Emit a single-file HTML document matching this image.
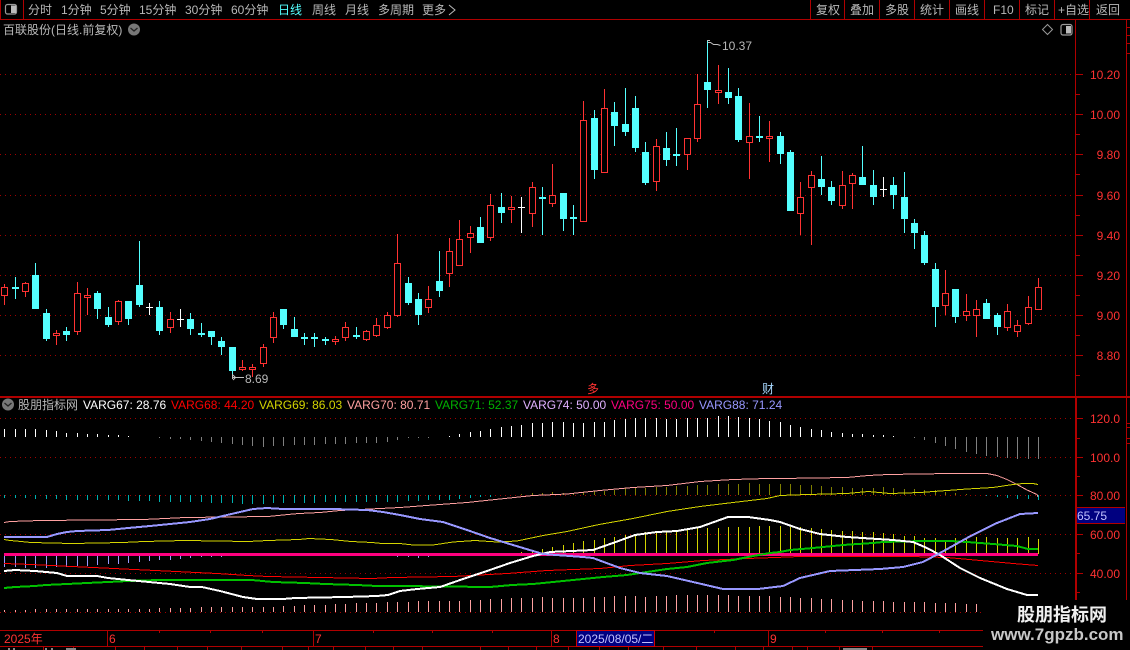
<!DOCTYPE html>
<html><head><meta charset="utf-8"><style>
html,body{margin:0;padding:0;background:#000;width:1130px;height:650px;overflow:hidden}
svg{display:block}
text{font-family:"Liberation Sans","WenQuanYi Zen Hei","Noto Sans CJK SC",sans-serif;font-size:12px}
</style></head><body>
<svg width="1130" height="650" viewBox="0 0 1130 650" shape-rendering="crispEdges">
<rect width="1130" height="650" fill="#000"/>
<!-- top bar -->
<path d="M0 19.5H1130M23.5 0V19M810.5 0V19M844.5 0V19M879.5 0V19M914.5 0V19M949.5 0V19M984.5 0V19M1019.5 0V19M1054.5 0V19M1089.5 0V19" stroke="#b00000" fill="none"/>
<rect x="0" y="0" width="1" height="19" fill="#b00000"/>
<g shape-rendering="auto">
<rect x="5.5" y="4.5" width="11" height="9.5" rx="2" fill="none" stroke="#999" stroke-width="1.2"/><rect x="11" y="5.5" width="5" height="7.5" fill="#bbb"/>
</g>
<g fill="#b8b8b8">
<text x="28" y="14">分时</text><text x="61" y="14">1分钟</text><text x="100" y="14">5分钟</text><text x="139" y="14">15分钟</text><text x="185" y="14">30分钟</text><text x="231" y="14">60分钟</text><text x="278" y="14" fill="#54ffff">日线</text><text x="312" y="14">周线</text><text x="345" y="14">月线</text><text x="378" y="14">多周期</text><text x="422" y="14">更多</text>
<text x="816" y="14">复权</text><text x="850" y="14">叠加</text><text x="885" y="14">多股</text><text x="920" y="14">统计</text><text x="955" y="14">画线</text><text x="993" y="14">F10</text><text x="1025" y="14">标记</text><text x="1058" y="14">+自选</text><text x="1096" y="14">返回</text>
<text x="3" y="34">百联股份(日线.前复权)</text>
<text x="722" y="50">10.37</text><text x="245" y="383">8.69</text>
</g>
<path d="M449 5l6 5-6 5" fill="none" stroke="#bbb" shape-rendering="auto"/>
<g shape-rendering="auto">
<circle cx="134" cy="29.5" r="6" fill="#777"/><path d="M130.5 28l3.5 3 3.5-3" fill="none" stroke="#222" stroke-width="1.3"/>
<path d="M1047.5 24.5l5 5-5 5-5-5z" fill="none" stroke="#999"/>
<rect x="1061" y="24.5" width="11" height="10.5" rx="2" fill="none" stroke="#999" stroke-width="1.2"/><rect x="1066" y="26" width="5" height="7.5" fill="#bbb"/>
</g>
<!-- main grid -->
<path d="M0 74.5H1075M0 114.5H1075M0 154.5H1075M0 195.5H1075M0 235.5H1075M0 275.5H1075M0 315.5H1075M0 355.5H1075" stroke="#a00000" stroke-dasharray="1 4" fill="none"/>
<!-- frame -->
<path d="M1075.5 19V396M1126.5 19V600M0 396.5H1130M0 397.5H1130M1077 507.5H1125M1077 523.5H1125" stroke="#b00000" fill="none"/>
<rect x="1075" y="397" width="2" height="203" fill="#b00000"/>
<path d="M1076 74.5h7M1076 94.5h4M1076 114.5h7M1076 134.5h4M1076 154.5h7M1076 174.5h4M1076 195.5h7M1076 215.5h4M1076 235.5h7M1076 255.5h4M1076 275.5h7M1076 295.5h4M1076 315.5h7M1076 335.5h4M1076 355.5h7M1076 375.5h4M1077 418.5h6M1077 438.5h3M1077 457.5h6M1077 476.5h3M1077 495.5h6M1077 534.5h6M1077 553.5h3M1077 573.5h6M1077 592.5h3M1127 27.5h3M1127 35.5h3M1127 43.5h3M1127 53.5h3M1127 423.5h3M1127 427.5h3M1127 438.5h3M1127 443.5h3" stroke="#b00000" fill="none"/>
<g fill="#ff3232" text-anchor="end">
<text x="1120" y="79">10.20</text><text x="1120" y="119">10.00</text><text x="1120" y="159">9.80</text><text x="1120" y="200">9.60</text><text x="1120" y="240">9.40</text><text x="1120" y="280">9.20</text><text x="1120" y="320">9.00</text><text x="1120" y="360">8.80</text>
<text x="1120" y="423">120.0</text><text x="1120" y="462">100.0</text><text x="1120" y="500">80.00</text><text x="1120" y="539">60.00</text><text x="1120" y="578">40.00</text>
</g>
<rect x="1077" y="508" width="48" height="15" fill="#000080"/>
<text x="1077" y="520" fill="#c0c0ff">65.75</text>
<!-- candles -->
<path fill="none" stroke="#ff3232" d="M4.5 284V305M25.5 282V297M56.5 330V345M77.5 282V335M87.5 288V315M118.5 300V325M170.5 312V333M242.5 360V371M252.5 364V377M263.5 344V367M273.5 312V343M335.5 336V345M345.5 322V341M366.5 330V341M376.5 318V337M387.5 312V329M397.5 234V317M428.5 286V313M449.5 238V287M459.5 220V266M470.5 226V253M490.5 194V241M511.5 196V223M532.5 182V227M552.5 164V207M583.5 101V222M604.5 89V173M656.5 139V191M687.5 138V170M697.5 74V142M718.5 65V104M749.5 103V179M769.5 121V162M800.5 182V235M811.5 171V245M842.5 171V209M852.5 173V209M945.5 270V315M966.5 294V321M976.5 300V337M1007.5 304V331M1017.5 320V337M1028.5 296V325M1038.5 278V310"/>
<path fill="#000" stroke="#ff3232" d="M1.5 287.5h6v8h-6zM22.5 283.5h6v8h-6zM53.5 333.5h6v2h-6zM74.5 293.5h6v38h-6zM84.5 295.5h6v2h-6zM115.5 301.5h6v20h-6zM167.5 319.5h6v8h-6zM239.5 367.5h6v2h-6zM249.5 367.5h6v2h-6zM260.5 347.5h6v16h-6zM270.5 317.5h6v20h-6zM332.5 339.5h6v2h-6zM342.5 327.5h6v10h-6zM363.5 331.5h6v8h-6zM373.5 325.5h6v10h-6zM384.5 315.5h6v12h-6zM394.5 263.5h6v52h-6zM425.5 299.5h6v8h-6zM446.5 251.5h6v22h-6zM456.5 239.5h6v26h-6zM467.5 233.5h6v4h-6zM487.5 205.5h6v32h-6zM508.5 207.5h6v2h-6zM529.5 187.5h6v26h-6zM549.5 195.5h6v8h-6zM580.5 120.5h6v101h-6zM601.5 108.5h6v64h-6zM653.5 146.5h6v35h-6zM684.5 138.5h6v16h-6zM694.5 104.5h6v34h-6zM715.5 90.5h6v2h-6zM746.5 136.5h6v6h-6zM766.5 136.5h6v2h-6zM797.5 197.5h6v16h-6zM808.5 175.5h6v12h-6zM839.5 185.5h6v20h-6zM849.5 175.5h6v8h-6zM942.5 293.5h6v12h-6zM963.5 311.5h6v4h-6zM973.5 309.5h6v6h-6zM1004.5 311.5h6v16h-6zM1014.5 325.5h6v6h-6zM1025.5 307.5h6v16h-6zM1035.5 287.5h6v22h-6z"/>
<path fill="none" stroke="#54ffff" d="M15.5 277V299M35.5 263V309M46.5 309V341M66.5 327V341M97.5 291V319M108.5 307V327M128.5 301V325M139.5 241V307M159.5 301V335M190.5 313V335M201.5 323V337M211.5 331V345M221.5 337V355M232.5 347V379M283.5 309V329M294.5 317V337M304.5 333V345M314.5 333V347M325.5 337V345M356.5 327V339M408.5 277V305M418.5 293V325M439.5 251V297M480.5 217V243M501.5 193V223M542.5 187V235M563.5 193V231M573.5 205V235M594.5 110V179M614.5 102V146M625.5 88V136M635.5 96V152M645.5 142V185M666.5 132V166M676.5 128V166M707.5 40V108M728.5 68V104M738.5 88V142M759.5 116V142M780.5 132V164M790.5 150V211M821.5 156V195M831.5 181V205M862.5 146V185M873.5 170V205M893.5 177V209M904.5 172V233M914.5 219V249M924.5 231V265M935.5 263V327M955.5 289V323M986.5 299V319M997.5 313V335"/>
<path fill="#54ffff" d="M12 287h7v2h-7zM32 275h7v34h-7zM43 313h7v26h-7zM63 331h7v4h-7zM94 293h7v16h-7zM105 317h7v8h-7zM125 301h7v18h-7zM136 285h7v20h-7zM156 307h7v24h-7zM187 319h7v10h-7zM198 333h7v2h-7zM208 331h7v6h-7zM218 341h7v6h-7zM229 347h7v24h-7zM280 309h7v16h-7zM291 329h7v8h-7zM301 337h7v2h-7zM311 337h7v2h-7zM322 339h7v2h-7zM353 335h7v2h-7zM405 283h7v20h-7zM415 299h7v16h-7zM436 281h7v10h-7zM477 227h7v16h-7zM498 207h7v6h-7zM539 197h7v2h-7zM560 193h7v26h-7zM570 217h7v2h-7zM591 118h7v52h-7zM611 112h7v14h-7zM622 124h7v8h-7zM632 108h7v40h-7zM642 152h7v31h-7zM663 148h7v12h-7zM673 154h7v2h-7zM704 82h7v8h-7zM725 92h7v6h-7zM735 96h7v44h-7zM756 136h7v2h-7zM777 136h7v18h-7zM787 152h7v59h-7zM818 179h7v8h-7zM828 187h7v14h-7zM859 177h7v8h-7zM870 185h7v12h-7zM890 185h7v10h-7zM901 197h7v22h-7zM911 223h7v10h-7zM921 235h7v28h-7zM932 269h7v38h-7zM952 289h7v28h-7zM983 303h7v16h-7zM994 315h7v12h-7z"/>
<path fill="none" stroke="#fff" d="M149.5 303V315M146 307.5h7M180.5 309V327M177 319.5h7M521.5 197V233M518 207.5h7M883.5 177V197M880 189.5h7"/>
<!-- flag and arrow -->
<path d="M707 40.5h3M707.5 42.5h3l3 2h4l3 1" fill="none" stroke="#c0c0c0" shape-rendering="auto"/>
<path d="M232.5 374V379M233 377.5H244M233 375l2 2M233 380l3-3" fill="none" stroke="#c0c0c0" shape-rendering="auto"/>
<text x="587" y="393" fill="#ff3232">多</text>
<text x="762" y="393" fill="#a8d8ff">财</text>
<!-- indicator title -->
<g shape-rendering="auto"><circle cx="8" cy="404.5" r="6" fill="#777"/><path d="M4.5 403l3.5 3 3.5-3" fill="none" stroke="#222" stroke-width="1.3"/></g>
<text x="18" y="409" fill="#b8b8b8">股朋指标网</text>
<text x="83" y="409" fill="#fff">VARG67: 28.76</text>
<text x="171" y="409" fill="#ff0000">VARG68: 44.20</text>
<text x="259" y="409" fill="#d4d400">VARG69: 86.03</text>
<text x="347" y="409" fill="#ffa0a0">VARG70: 80.71</text>
<text x="435" y="409" fill="#00b000">VARG71: 52.37</text>
<text x="523" y="409" fill="#e0b0ff">VARG74: 50.00</text>
<text x="611" y="409" fill="#ff0080">VARG75: 50.00</text>
<text x="699" y="409" fill="#9898ff">VARG88: 71.24</text>
<!-- lower grid -->
<path d="M0 418.5H1075M0 457.5H1075M0 495.5H1075M0 534.5H1075M0 573.5H1075M0 612.5H1075" stroke="#a00000" stroke-dasharray="1 4" fill="none"/>
<!-- white bars -->
<path fill="none" stroke="#fff" d="M4.5 429V437M15.5 429V437M25.5 429V437M35.5 429V437M46.5 430V437M56.5 431V437M66.5 433V437M77.5 433V437M87.5 434V437M97.5 434V437M108.5 435V437M118.5 435V437M128.5 436V437M449.5 436V437M459.5 434V437M470.5 432V437M480.5 431V437M490.5 429V437M501.5 427V437M511.5 426V437M521.5 425V437M532.5 423V437M542.5 423V437M552.5 422V437M563.5 422V437M573.5 423V437M583.5 423V437M594.5 422V437M604.5 422V437M614.5 420V437M625.5 419V437M635.5 418V437M645.5 418V437M656.5 418V437M666.5 419V437M676.5 419V437M687.5 418V437M697.5 418V437M707.5 418V437M718.5 416V437M728.5 416V437M738.5 417V437M749.5 418V437M759.5 419V437M769.5 421V437M780.5 422V437M790.5 425V437M800.5 427V437M811.5 429V437M821.5 430V437M831.5 432V437M842.5 433V437M852.5 434V437M862.5 434V437M873.5 435V437M883.5 435V437M893.5 436V437"/>
<path fill="none" stroke="#808080" d="M159.5 437V438M170.5 437V439M180.5 437V439M190.5 437V440M201.5 437V441M211.5 437V442M221.5 437V443M232.5 437V444M242.5 437V445M252.5 437V446M263.5 437V447M273.5 437V446M283.5 437V446M294.5 437V445M304.5 437V445M314.5 437V445M325.5 437V444M335.5 437V444M345.5 437V444M356.5 437V443M366.5 437V443M376.5 437V443M387.5 437V442M397.5 437V440M408.5 437V438M418.5 437V438M428.5 437V438M914.5 437V438M924.5 437V440M935.5 437V443M945.5 437V446M955.5 437V449M966.5 437V452M976.5 437V454M986.5 437V456M997.5 437V457M1007.5 437V458M1017.5 437V459M1028.5 437V459M1038.5 437V459"/>
<!-- teal and olive -->
<path fill="none" stroke="#00b0b0" d="M4.5 495V498M15.5 495V498M25.5 495V498M35.5 495V499M46.5 495V499M56.5 495V499M66.5 495V500M77.5 495V500M87.5 495V500M97.5 495V500M108.5 495V500M118.5 495V500M128.5 495V501M139.5 495V501M149.5 495V501M159.5 495V502M170.5 495V502M180.5 495V502M190.5 495V502M201.5 495V502M211.5 495V503M221.5 495V503M232.5 495V503M242.5 495V504M252.5 495V504M263.5 495V504M273.5 495V503M283.5 495V503M294.5 495V503M304.5 495V503M314.5 495V503M325.5 495V502M335.5 495V502M345.5 495V502M356.5 495V502M366.5 495V502M376.5 495V502M387.5 495V502M397.5 495V502M408.5 495V501M418.5 495V501M428.5 495V500M439.5 495V500M449.5 495V500M459.5 495V499M470.5 495V498M480.5 495V497M490.5 495V497M986.5 495V496M997.5 495V497M1007.5 495V498M1017.5 495V499M1028.5 495V499M1038.5 495V500"/>
<path fill="none" stroke="#808000" d="M521.5 494V495M532.5 493V495M542.5 493V495M552.5 492V495M563.5 493V495M573.5 493V495M583.5 492V495M594.5 491V495M604.5 491V495M614.5 490V495M625.5 488V495M635.5 488V495M645.5 488V495M656.5 487V495M666.5 487V495M676.5 486V495M687.5 486V495M697.5 485V495M707.5 485V495M718.5 484V495M728.5 484V495M738.5 484V495M749.5 483V495M759.5 484V495M769.5 484V495M780.5 484V495M790.5 484V495M800.5 485V495M811.5 485V495M821.5 486V495M831.5 487V495M842.5 487V495M852.5 488V495M862.5 488V495M873.5 488V495M883.5 487V495M893.5 488V495M904.5 489V495M914.5 489V495M924.5 490V495M935.5 490V495M945.5 492V495M955.5 493V495M966.5 494V495"/>
<!-- purple bars, yellow bars, pink bars -->
<path fill="none" stroke="#9898ff" d="M4.5 554V567M15.5 554V567M25.5 554V568M35.5 554V568M46.5 554V568M56.5 554V567M66.5 554V567M77.5 554V566M87.5 554V566M97.5 554V565M108.5 554V564M118.5 554V564M128.5 554V563M139.5 554V562M149.5 554V561M159.5 554V560M170.5 554V560M180.5 554V559M190.5 554V558M201.5 554V557M211.5 554V557M221.5 554V557M232.5 554V556M242.5 554V556M252.5 554V556M263.5 554V556M273.5 554V556M387.5 554V556M397.5 554V557M408.5 554V557M418.5 554V558M428.5 554V557M439.5 554V556"/>
<path fill="none" stroke="#d4d400" d="M521.5 552V554M532.5 550V554M542.5 549V554M552.5 547V554M563.5 545V554M573.5 543V554M583.5 541V554M594.5 540V554M604.5 538V554M614.5 537V554M625.5 535V554M635.5 534V554M645.5 532V554M656.5 533V554M666.5 531V554M676.5 531V554M687.5 529V554M697.5 528V554M707.5 528V554M718.5 528V554M728.5 527V554M738.5 527V554M749.5 527V554M759.5 526V554M769.5 526V554M780.5 526V554M790.5 527V554M800.5 527V554M811.5 528V554M821.5 529V554M831.5 530V554M842.5 531V554M852.5 531V554M862.5 532V554M873.5 532V554M883.5 533V554M893.5 534V554M904.5 536V554M914.5 536V554M924.5 538V554M935.5 538V554M945.5 540V554M955.5 538V554M966.5 538V554M976.5 537V554M986.5 537V554M997.5 538V554M1007.5 538V554M1017.5 538V554M1028.5 537V554M1038.5 539V554"/>
<path fill="none" stroke="#ffa0a0" d="M4.5 610V612M15.5 610V612M25.5 610V612M35.5 609V612M46.5 609V612M56.5 609V612M66.5 609V612M77.5 609V612M87.5 609V612M97.5 609V612M108.5 609V612M118.5 609V612M128.5 609V612M139.5 609V612M149.5 609V612M159.5 608V612M170.5 608V612M180.5 608V612M190.5 608V612M201.5 607V612M211.5 607V612M221.5 607V612M232.5 607V612M242.5 607V612M252.5 607V612M263.5 607V612M273.5 607V612M283.5 606V612M294.5 606V612M304.5 605V612M314.5 605V612M325.5 605V612M335.5 604V612M345.5 604V612M356.5 603V612M366.5 603V612M376.5 603V612M387.5 602V612M397.5 602V612M408.5 602V612M418.5 601V612M428.5 601V612M439.5 601V612M449.5 601V612M459.5 601V612M470.5 600V612M480.5 600V612M490.5 599V612M501.5 599V612M511.5 598V612M521.5 598V612M532.5 598V612M542.5 597V612M552.5 598V612M563.5 598V612M573.5 598V612M583.5 598V612M594.5 597V612M604.5 597V612M614.5 596V612M625.5 596V612M635.5 596V612M645.5 597V612M656.5 596V612M666.5 596V612M676.5 595V612M687.5 595V612M697.5 595V612M707.5 595V612M718.5 595V612M728.5 595V612M738.5 596V612M749.5 596V612M759.5 596V612M769.5 596V612M780.5 597V612M790.5 597V612M800.5 598V612M811.5 598V612M821.5 599V612M831.5 599V612M842.5 600V612M852.5 600V612M862.5 601V612M873.5 601V612M883.5 601V612M893.5 602V612M904.5 602V612M914.5 602V612M924.5 602V612M935.5 603V612M945.5 603V612M955.5 603V612M966.5 604V612M976.5 604V612"/>
<!-- lines -->
<g fill="none">
<polyline stroke="#ffa0a0" points="4,522.5 10,521.5 41,520.5 143,519.5 165,518.5 185,517.5 268,516.5 288,514.5 299,513.5 320,512.5 330,511.5 340,510.5 400,507.5 433,505 467,502.5 500,499 533,495.5 567,494 600,490.5 633,487.5 667,485.5 700,481.5 733,479.5 767,478.5 780,478.5 847,477.5 868,475.5 888,474.5 950,473.5 987,473.5 997,475.5 1007,479.5 1017,484.5 1027,490 1037,494.5 1038,497"/>
<polyline stroke="#d4d400" points="4,539.5 10,540.5 21,541.5 31,542.5 72,543.5 123,542.5 144,541.5 185,540.5 248,541.5 268,540.5 299,539.5 309,538.5 331,539.5 341,540.5 351,541.5 372,542.5 382,543.5 400,543.5 413,545 433,545 453,542 475,540.5 497,542 517,541 543,535.5 567,531.5 599,524.5 633,518.5 667,511.5 700,506.5 733,502.5 767,498.5 780,495.5 807,494.5 847,493.5 868,491.5 890,493.5 920,492.5 947,490.5 967,489 993,487.5 1013,484.5 1023,483.5 1033,483.5 1038,484.5"/>
<polyline stroke="#ff0000" points="4,563.5 31,564.5 52,565.5 72,566.5 93,567.5 114,568.5 134,569.5 155,570.5 176,571.5 196,572.5 217,573.5 248,575.5 268,576.5 320,577.5 372,578.5 392,577.5 453,576.5 507,573.5 547,570.5 600,568.5 630,565.5 667,563.5 703,560.5 747,558.5 775,557.5 800,556.5 857,556.5 910,556.5 947,557.5 980,560.5 1013,563.5 1038,565.5"/>
<rect x="4" y="553" width="1034" height="3" fill="#ff0080"/>
<polyline stroke="#00c000" stroke-width="2" points="4,588 15,587 35,586 46,585 67,584 87,583 108,582 128,581 159,580 252,580 273,582 305,583 325,584 357,585 377,586 400,586 490,587 512,585 533,584 563,581 583,579 603,577 627,575 647,572 667,569 687,567 707,563 733,560 753,556 770,553 780,552 790,550 813,548 843,545 873,543 883,542 923,541 950,541 967,542 993,544 1017,546 1028,549 1038,549"/>
<polyline stroke="#fff" stroke-width="2" points="4,571 15,570 35,571 46,572 57,573 67,576 97,576 108,578 118,579 128,580 149,582 170,584 190,587 202,587 220,591 243,597 257,599 283,599 295,598 345,597 377,596 388,595 400,591 417,589 440,587 463,579 487,571 510,563 533,556 550,552 593,550 613,543 635,535 657,532 677,531 700,527 728,517 748,517 770,520 780,522 800,529 820,534 847,537 893,540 913,542 927,548 940,555 960,568 980,578 1007,589 1027,595 1038,595"/>
<polyline stroke="#9898ff" stroke-width="2" points="4,537 47,537 57,534 67,532 77,531 108,530 128,528 150,526 170,524 190,522 210,519 227,515 240,512 253,509 267,508 283,509 333,509 367,510 383,512 400,515 420,519 443,522 467,530 490,538 513,545 543,554 583,557 593,558 620,568 640,573 667,576 693,582 723,589 758,589 783,586 800,578 830,571 880,569 903,567 923,562 940,553 967,538 997,523 1020,514 1038,513"/>
</g>
<!-- date bar -->
<path d="M0 630.5H1130M0 646.5H1130M107.5 630V646M313.5 630V646M551.5 630V646M768.5 630V646M159.5 630V633M210.5 630V633M262.5 630V633M373.5 630V633M432.5 630V633M492.5 630V633M714.5 630V633M825.5 630V633M882.5 630V633M939.5 630V633M43.5 646V650M73.5 646V650M115.5 646V650M144.5 646V650M177.5 646V650M207.5 646V650M241.5 646V650M282.5 646V650M308.5 646V650M333.5 646V650M365.5 646V650M393.5 646V650M422.5 646V650M480.5 646V650M508.5 646V650M536.5 646V650M568.5 646V650M599.5 646V650M628.5 646V650M663.5 646V650M696.5 646V650M735.5 646V650M763.5 646V650M792.5 646V650M807.5 646V650M839.5 646V650M872.5 646V650" stroke="#b00000" fill="none"/>
<g fill="#ff3232"><text x="4" y="643">2025年</text><text x="109" y="643">6</text><text x="315" y="643">7</text><text x="553" y="643">8</text><text x="770" y="643">9</text></g>
<rect x="576.5" y="630.5" width="78" height="16" fill="#000080" stroke="#d00000"/>
<text x="578" y="643" fill="#c0c0ff">2025/08/05/二</text>
<path d="M8 648h2v2h-2zM13 648h2v2h-2zM45 648h2v2h-2zM51 648h2v2h-2zM66 648h10v2h-10zM843 648h24v2h-24z" fill="#888"/>
<!-- watermark -->
<rect x="983" y="600" width="147" height="50" fill="#000"/>
<text x="1017" y="621" fill="#f0f0f0" style="font-size:18px;font-weight:bold">股朋指标网</text>
<text x="991" y="640" fill="#c8c8c8" style="font-size:17px;font-weight:bold">www.7gpzb.com</text>
</svg>
</body></html>
